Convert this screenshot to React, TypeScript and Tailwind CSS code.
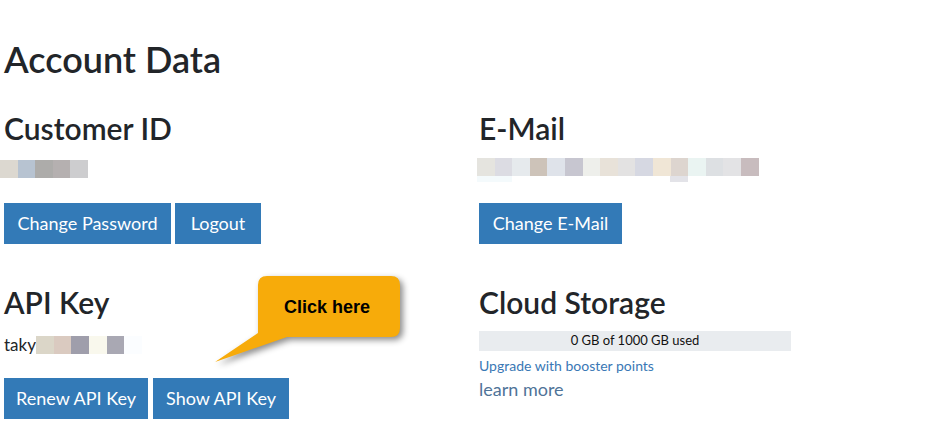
import React from "react";

const font = { fontFamily: "Lato, 'Noto Sans', sans-serif" };

function Blocks({ colors, w = 18 }: { colors: string[]; w?: number }) {
  return (
    <div className="flex h-[18px]">
      {colors.map((c, i) => (
        <div key={i} className="h-full" style={{ width: w, background: c }} />
      ))}
    </div>
  );
}

function Btn({ children, w }: { children: React.ReactNode; w: string }) {
  return (
    <div className={`${w} h-[41px] bg-[#337ab7] text-white text-[18px] flex items-center justify-center`}>
      {children}
    </div>
  );
}

export default function App() {
  return (
    <div className="relative w-[936px] h-[440px] bg-white text-[#222529] overflow-hidden" style={font}>
      <h1 className="pl-[4px] pt-[39px] text-[36px] leading-[40px] font-semibold">Account Data</h1>
      <div className="grid grid-cols-[479px_1fr] mt-[33px]">
        {/* Row 1 left */}
        <div>
          <h2 className="pl-[4px] text-[30px] leading-[33px] font-semibold">Customer ID</h2>
          <div className="mt-[15px]">
            <Blocks w={17.6} colors={["#dcd8d0", "#b7c3d1", "#adacaa", "#b5b0b0", "#cdcdcf"]} />
          </div>
          <div className="flex gap-[4px] pl-[4px] mt-[25px]">
            <Btn w="w-[167px]">Change Password</Btn>
            <Btn w="w-[86px]">Logout</Btn>
          </div>
        </div>
        {/* Row 1 right */}
        <div>
          <h2 className="text-[30px] leading-[33px] font-semibold">E-Mail</h2>
          <div className="mt-[13px] -ml-[2px]">
            <Blocks
              w={17.6}
              colors={[
                "#e5e4df", "#dcdce3", "#e6eaed", "#cdc3b9", "#dfe3ea", "#c7c6d0", "#eeefeb", "#e8e2d9",
                "#e3e2e2", "#d6d8e2", "#f0e6d6", "#ddd5cf", "#eaf4f2", "#dde0e3", "#e3e3e5", "#c8bcbe",
              ]}
            />
            <div className="flex h-[6px]">
              <div className="w-[35px] h-full bg-[#f4fafc]" />
              <div className="w-[158px]" />
              <div className="w-[18px] h-full bg-[#e3e3e8]" />
            </div>
          </div>
          <div className="flex mt-[21px]">
            <Btn w="w-[143px]">Change E-Mail</Btn>
          </div>
        </div>
        {/* Row 2 left */}
        <div className="pl-[4px] mt-[42px]">
          <h2 className="text-[30px] leading-[33px] font-semibold">API Key</h2>
          <div className="flex items-center mt-[17px] h-[18px]">
            <span className="text-[17px] leading-[18px]">taky</span>
            <Blocks w={17.7} colors={["#dbd6c8", "#dacac0", "#9f9eab", "#f9f8ed", "#a9a8b3", "#fbfdff"]} />
          </div>
          <div className="flex gap-[5px] mt-[24px]">
            <Btn w="w-[144px]">Renew API Key</Btn>
            <Btn w="w-[136px]">Show API Key</Btn>
          </div>
        </div>
        {/* Row 2 right */}
        <div className="mt-[42px]">
          <h2 className="text-[30px] leading-[33px] font-semibold">Cloud Storage</h2>
          <div className="mt-[12px] w-[312px] h-[20px] bg-[#e9ecef] flex items-center justify-center text-[13px] text-[#111]">
            0 GB of 1000 GB used
          </div>
          <div className="mt-[6px] text-[14px] leading-[18px] text-[#3a78b5]">Upgrade with booster points</div>
          <div className="mt-[3px] text-[18px] leading-[22px] text-[#4f7398]">learn more</div>
        </div>
      </div>

      {/* Callout */}
      <svg className="absolute left-0 top-0 drop-shadow-[3px_3px_3px_rgba(0,0,0,0.45)]" width="936" height="440">
        <path
          d="M 267 276 H 391 Q 400 276 400 285 V 328 Q 400 337 391 337 H 287 L 215 362 L 258 333 V 285 Q 258 276 267 276 Z"
          fill="#f7ab0a"
        />
      </svg>
      <div
        className="absolute left-[256px] top-[277px] w-[142px] h-[61px] flex items-center justify-center text-[18px] font-bold text-black"
        style={{ fontFamily: "'Liberation Sans', Arial, sans-serif" }}
      >
        Click here
      </div>
    </div>
  );
}
